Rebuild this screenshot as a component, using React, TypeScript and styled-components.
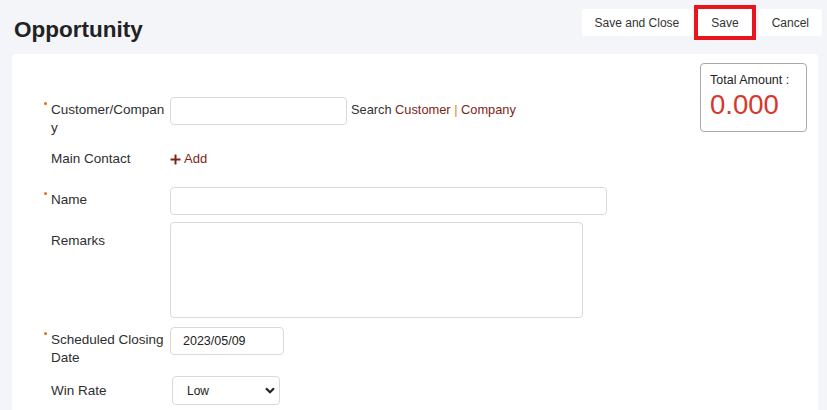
import styled, { createGlobalStyle } from "styled-components";

const GlobalStyle = createGlobalStyle`
  html, body {
    margin: 0;
    padding: 0;
    background: #f4f5f9;
    font-family: "Liberation Sans", Arial, sans-serif;
    color: #333;
  }
  * {
    box-sizing: border-box;
  }
`;

export default function App() {
  return (
    <>
      <GlobalStyle />
      <Page>
        <Header>
          <Title>Opportunity</Title>
          <Actions>
            <ActionButton>Save and Close</ActionButton>
            <ActionButton $highlight>Save</ActionButton>
            <ActionButton>Cancel</ActionButton>
          </Actions>
        </Header>

        <Panel>
          <TotalBox>
            <TotalLabel>Total Amount :</TotalLabel>
            <TotalValue>0.000</TotalValue>
          </TotalBox>

          <Form>
            <Row $mt={43}>
              <Label $required>Customer/Company</Label>
              <TextInput $width={177} />
              <SearchLinks>
                Search <LinkText>Customer</LinkText> <Pipe>|</Pipe> <LinkText>Company</LinkText>
              </SearchLinks>
            </Row>

            <Row $mt={9}>
              <Label>Main Contact</Label>
              <AddLink>
                <svg width="11" height="11" viewBox="0 0 11 11">
                  <path d="M5.5 0.5v10M0.5 5.5h10" stroke="#7e2416" strokeWidth="2" />
                </svg>
                Add
              </AddLink>
            </Row>

            <Row $mt={19}>
              <Label $required>Name</Label>
              <TextInput $width={437} />
            </Row>

            <Row $mt={7}>
              <Label $pt={10}>Remarks</Label>
              <TextArea $width={413} />
            </Row>

            <Row $mt={9}>
              <Label $required>Scheduled Closing Date</Label>
              <TextInput $width={114} defaultValue="2023/05/09" />
            </Row>

            <Row $mt={9}>
              <Label $pt={6}>Win Rate</Label>
              <SelectWrap>
                <Select defaultValue="low">
                  <option value="low">Low</option>
                  <option value="mid">Medium</option>
                  <option value="high">High</option>
                </Select>
                <Chevron width="10" height="7" viewBox="0 0 10 7">
                  <path d="M1 1.2l4 4 4-4" fill="none" stroke="#222" strokeWidth="2.2" />
                </Chevron>
              </SelectWrap>
            </Row>
          </Form>
        </Panel>
      </Page>
    </>
  );
}

const Page = styled.div`
  display: flex;
  flex-direction: column;
  min-height: 410px;
  padding: 0 9px 0 12px;
`;

const Header = styled.header`
  display: flex;
  align-items: flex-start;
  justify-content: space-between;
  height: 54px;
  padding: 9px 0 0 2px;
  margin-right: -4px;
`;

const Title = styled.h1`
  margin: 7px 0 0;
  color: #222;
  font-size: 22.5px;
  font-weight: 700;
  line-height: 28px;
`;

const Actions = styled.div`
  display: flex;
  gap: 7px;
`;

const ActionButton = styled.button<{ $highlight?: boolean }>`
  height: 27px;
  padding: 0 13px;
  border: none;
  border-radius: ${(p) => (p.$highlight ? "0" : "3px")};
  background: #fff;
  color: #333;
  font-family: inherit;
  font-size: 12px;
  outline: ${(p) => (p.$highlight ? "4px solid #e8141e" : "none")};
  ${(p) => p.$highlight && "margin: 0 0 0 -1px;"}
`;

const Panel = styled.section`
  position: relative;
  flex: 1;
  background: #fff;
  border-radius: 4px 4px 0 0;
  padding: 0 0 0 32px;
`;

const TotalBox = styled.div`
  position: absolute;
  top: 9px;
  right: 11px;
  width: 107px;
  height: 69px;
  padding: 8px 9px;
  border: 1px solid #aaa;
  border-radius: 4px;
`;

const TotalLabel = styled.div`
  color: #222;
  font-size: 12.5px;
  line-height: 16px;
`;

const TotalValue = styled.div`
  color: #d6382c;
  font-size: 27.5px;
  line-height: 34px;
`;

const Form = styled.div`
  display: flex;
  flex-direction: column;
`;

const Row = styled.div<{ $mt: number }>`
  display: flex;
  align-items: flex-start;
  margin-top: ${(p) => p.$mt}px;
`;

const Label = styled.label<{ $required?: boolean; $pt?: number }>`
  position: relative;
  flex: 0 0 126px;
  width: 126px;
  padding: ${(p) => p.$pt ?? 4}px 4px 0 7px;
  font-size: 13.5px;
  line-height: 18px;
  color: #2e2e2e;
  overflow-wrap: anywhere;

  &::before {
    content: "";
    display: ${(p) => (p.$required ? "block" : "none")};
    position: absolute;
    left: 0;
    top: 5px;
    width: 3px;
    height: 3px;
    border-radius: 50%;
    background: #ec6a12;
  }
`;

const TextInput = styled.input<{ $width: number }>`
  width: ${(p) => p.$width}px;
  height: 28px;
  padding: 0 12px;
  border: 1px solid #d9d9d9;
  border-radius: 4px;
  color: #222;
  font-family: inherit;
  font-size: 12.5px;
`;

const TextArea = styled.textarea<{ $width: number }>`
  width: ${(p) => p.$width}px;
  height: 96px;
  border: 1px solid #d9d9d9;
  border-radius: 4px;
  resize: none;
`;

const SearchLinks = styled.span`
  margin: 5px 0 0 4px;
  font-size: 12.8px;
  line-height: 16px;
  color: #333;
`;

const LinkText = styled.span`
  color: #7e2416;
`;

const Pipe = styled.span`
  color: #d9822b;
`;

const AddLink = styled.span`
  display: inline-flex;
  align-items: center;
  gap: 3px;
  margin-top: 5px;
  color: #7e2416;
  font-size: 13px;
  line-height: 16px;
`;

const SelectWrap = styled.div`
  position: relative;
  margin-left: 2px;
`;

const Select = styled.select`
  width: 108px;
  height: 29px;
  padding: 0 0 0 14px;
  border: 1px solid #d9d9d9;
  border-radius: 4px;
  background: #fff;
  color: #222;
  font-family: inherit;
  font-size: 12px;
  appearance: none;
`;

const Chevron = styled.svg`
  position: absolute;
  right: 5px;
  top: 11px;
  pointer-events: none;
`;
